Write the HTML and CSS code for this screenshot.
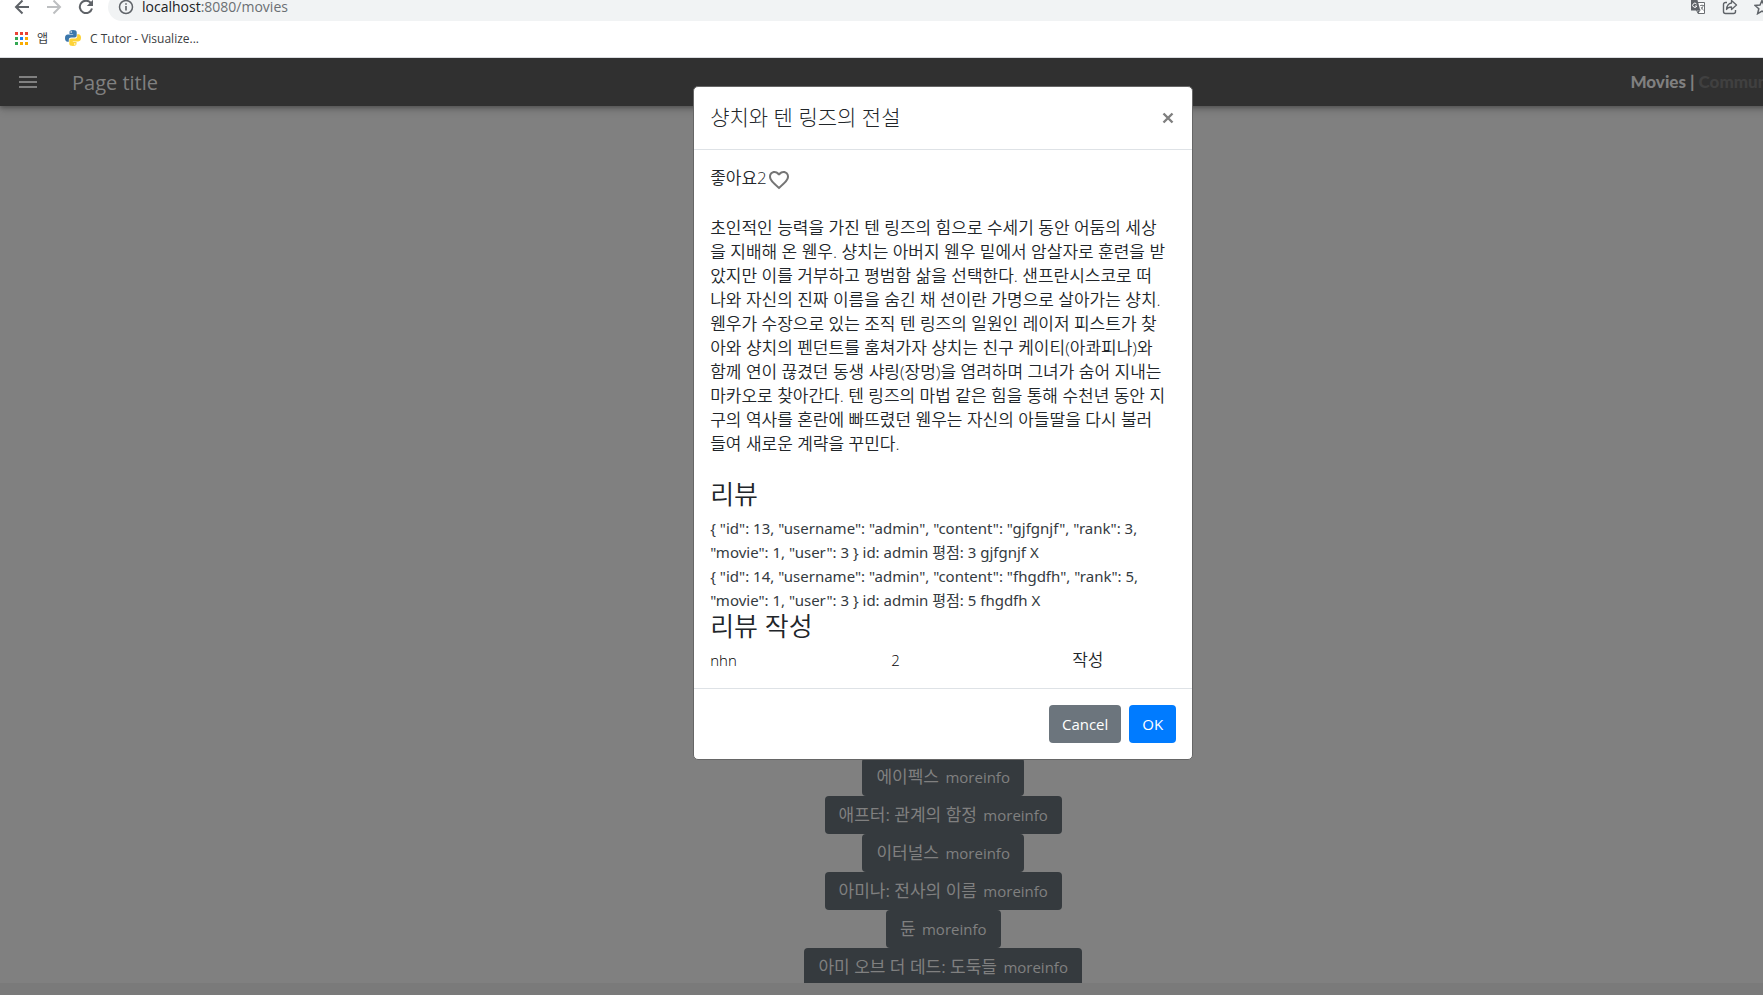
FILE: index.html
```html
<!DOCTYPE html>
<html lang="ko">
<head>
<meta charset="utf-8">
<title>Movies</title>
<link rel="stylesheet" href="styles.css">
</head>
<body>
<header class="browser">
  <div class="toolbar">
    <button class="tool" aria-label="Back"><svg width="16" height="16" viewBox="0 0 16 16"><path d="M15 8H2.500M8.500 1.500 2 8l6.500 6.500" fill="none" stroke="#5f6368" stroke-width="2"/></svg></button>
    <button class="tool" aria-label="Forward"><svg width="16" height="16" viewBox="0 0 16 16"><path d="M1 8h12.500M7.500 1.500 14 8l-6.500 6.500" fill="none" stroke="#bdbfc1" stroke-width="2"/></svg></button>
    <button class="tool" aria-label="Reload"><svg width="16" height="16" viewBox="0 0 16 16"><path d="M13 4.200A6.200 6.200 0 1 0 14 9.500" fill="none" stroke="#5f6368" stroke-width="2"/><path d="M15 .8V7H8.800z" fill="#5f6368"/></svg></button>
    <div class="omnibox">
      <svg width="16" height="16" viewBox="0 0 16 16"><circle cx="8" cy="8" r="6.500" fill="none" stroke="#5f6368" stroke-width="1.500"/><path d="M8 7v4.500M8 4.200v1.600" stroke="#5f6368" stroke-width="1.600"/></svg>
      <span class="url"><b>localhost</b>:8080/movies</span>
      <span class="omni-actions">
        <svg width="16" height="16" viewBox="0 0 16 16"><path d="M6 3.500h8.500v11H8L6.500 11" fill="#fff" stroke="#6b6e72"/><path d="M1 1h6.500l2.800 10.500H1z" fill="#5f6368"/><path d="M6.500 5a2.100 2.100 0 1 0 .3 2H5" fill="none" stroke="#fff"/><path d="M10 6.500h4M12 5.500v1M13.200 6.500c-.4 2-1.500 3.500-2.700 4.500M11 8l2.500 3.500" fill="none" stroke="#6b6e72" stroke-width=".8"/><path d="M7.500 11.500h2.800L8.200 14.500z" fill="#5f6368"/></svg>
        <svg width="16" height="16" viewBox="0 0 16 16"><path d="M5 3.500H3.500a2 2 0 0 0-2 2v7a2 2 0 0 0 2 2h8a2 2 0 0 0 2-2V11" fill="none" stroke="#5f6368" stroke-width="1.400"/><path d="M9.500 1.500 14.500 6l-5 4.500V8C7 8 5.500 8.800 4.500 10.500 4.800 7 6.500 4.500 9.500 4z" fill="none" stroke="#5f6368" stroke-width="1.300" stroke-linejoin="round"/></svg>
        <svg width="16" height="16" viewBox="0 0 16 16"><path d="m8 1.500 2 4.600 5 .4-3.800 3.300 1.200 4.900L8 12.100l-4.400 2.600 1.200-4.900L1 6.500l5-.4z" fill="none" stroke="#5f6368" stroke-width="1.500"/></svg>
      </span>
    </div>
  </div>
  <nav class="bookmarks">
    <a href="#" class="bookmark"><svg width="13" height="13" viewBox="0 0 13 13"><path d="M0 0h3v3H0zM5 0h3v3H5zM10 0h3v3h-3z" fill="#ea4335"/><path d="M0 5h3v3H0zM0 10h3v3H0z" fill="#34a853"/><path d="M5 5h3v3H5z" fill="#1a82f7"/><path d="M10 5h3v3h-3zM5 10h3v3H5zM10 10h3v3h-3z" fill="#f9ab00"/></svg><span>앱</span></a>
    <a href="#" class="bookmark"><svg width="16" height="16" viewBox="0 0 16 16"><path d="M8 0C5 0 4.500 1 4.500 2.200V4H8.200v.6H2.800C1 4.600 0 6 0 8.200s1 3.600 2.500 3.600h1.300V9.800c0-1.400 1.100-2.300 2.400-2.300h3.500c1.100 0 2-.9 2-2V2.200C11.700.8 10.500 0 8 0z" fill="#3b77ab"/><circle cx="6.200" cy="2" r=".8" fill="#fff"/><path d="M8 16c3 0 3.500-1 3.500-2.200V12H7.800v-.6h5.400c1.800 0 2.800-1.400 2.800-3.600s-1-3.600-2.500-3.600h-1.300v2c0 1.400-1.100 2.300-2.400 2.300H6.300c-1.100 0-2 .9-2 2v3.300C4.300 15.200 5.500 16 8 16z" fill="#fdd337"/><circle cx="9.800" cy="14" r=".8" fill="#fff"/></svg><span>C Tutor - Visualize...</span></a>
  </nav>
</header>
<div class="viewport">
  <div class="page">
    <header class="appbar">
      <button class="menu" aria-label="Menu"><svg width="24" height="24" viewBox="0 0 24 24"><path d="M3 6h18v2H3zM3 11h18v2H3zM3 16h18v2H3z" fill="#808080"/></svg></button>
      <h1 class="page-title">Page title</h1>
      <nav class="links"><a href="#" class="current">Movies</a> | <a href="#">Community</a></nav>
    </header>
    <main class="movies">
      <button class="movie">에이펙스 <span class="more">moreinfo</span></button>
      <button class="movie">애프터: 관계의 함정 <span class="more">moreinfo</span></button>
      <button class="movie">이터널스 <span class="more">moreinfo</span></button>
      <button class="movie">아미나: 전사의 이름 <span class="more">moreinfo</span></button>
      <button class="movie">듄 <span class="more">moreinfo</span></button>
      <button class="movie">아미 오브 더 데드: 도둑들 <span class="more">moreinfo</span></button>
    </main>
    <section class="modal" role="dialog" aria-labelledby="modal-title">
      <header class="modal-header">
        <h2 class="modal-title" id="modal-title">샹치와 텐 링즈의 전설</h2>
        <button class="close" aria-label="Close"><svg width="12" height="12" viewBox="0 0 12 12"><path d="m1.500 1.500 9 9m0-9-9 9" stroke="#7f7f7f" stroke-width="2.400"/></svg></button>
      </header>
      <div class="modal-body">
        <div class="like"><span>좋아요2</span><button class="heart" aria-label="Like"><svg width="24" height="24" viewBox="0 0 24 24"><path d="M12.100 18.550l-.1.100-.110-.100C7.140 14.240 4 11.390 4 8.500 4 6.500 5.500 5 7.500 5c1.540 0 3.040 1 3.570 2.360h1.860C13.460 6 14.960 5 16.500 5c2 0 3.500 1.500 3.500 3.500 0 2.890-3.140 5.740-7.900 10.050M16.500 3c-1.740 0-3.410.810-4.500 2.080C10.910 3.810 9.240 3 7.500 3 4.420 3 2 5.410 2 8.500c0 3.770 3.400 6.860 8.550 11.530L12 21.350l1.450-1.320C18.600 15.360 22 12.270 22 8.500 22 5.410 19.580 3 16.500 3z" fill="#757575"/></svg></button></div>
        <p class="overview">초인적인 능력을 가진 텐 링즈의 힘으로 수세기 동안 어둠의 세상<br>을 지배해 온 웬우. 샹치는 아버지 웬우 밑에서 암살자로 훈련을 받<br>았지만 이를 거부하고 평범함 삶을 선택한다. 샌프란시스코로 떠<br>나와 자신의 진짜 이름을 숨긴 채 션이란 가명으로 살아가는 샹치.<br>웬우가 수장으로 있는 조직 텐 링즈의 일원인 레이저 피스트가 찾<br>아와 샹치의 펜던트를 훔쳐가자 샹치는 친구 케이티(아콰피나)와<br>함께 연이 끊겼던 동생 샤링(장멍)을 염려하며 그녀가 숨어 지내는<br>마카오로 찾아간다. 텐 링즈의 마법 같은 힘을 통해 수천년 동안 지<br>구의 역사를 혼란에 빠뜨렸던 웬우는 자신의 아들딸을 다시 불러<br>들여 새로운 계략을 꾸민다.</p>
        <h3 class="section">리뷰</h3>
        <div class="review">{ "id": 13, "username": "admin", "content": "gjfgnjf", "rank": 3,<br>"movie": 1, "user": 3 } id: admin 평점: 3 gjfgnjf X</div>
        <div class="review">{ "id": 14, "username": "admin", "content": "fhgdfh", "rank": 5,<br>"movie": 1, "user": 3 } id: admin 평점: 5 fhgdfh X</div>
        <h3 class="section">리뷰 작성</h3>
        <form class="write">
          <input class="field" type="text" value="nhn" aria-label="리뷰">
          <input class="field" type="text" value="2" aria-label="평점">
          <button class="submit" type="button">작성</button>
        </form>
      </div>
      <footer class="modal-footer">
        <button class="btn cancel">Cancel</button>
        <button class="btn ok">OK</button>
      </footer>
    </section>
  </div>
  <div class="scrollbar"></div>
</div>
</body>
</html>
```
FILE: styles.css
```css
* { box-sizing: border-box; }
body {
  margin: 0;
  height: 100vh;
  display: flex;
  flex-direction: column;
  overflow: hidden;
  background: #fff;
  color: #212529;
  font-family: "Open Sans", "Noto Sans CJK KR", sans-serif;
}
button, input {
  margin: 0;
  padding: 0;
  border: 0;
  background: none;
  font: inherit;
  color: inherit;
}
svg { display: block; flex: none; }
a { color: inherit; text-decoration: none; }

.browser { flex: none; border-bottom: 1px solid #dadce0; }
.toolbar {
  height: 21px;
  display: flex;
  align-items: flex-end;
  overflow: hidden;
  padding-left: 14px;
  gap: 16px;
}
.tool { height: 28px; display: flex; align-items: center; }
.omnibox {
  flex: 1;
  height: 28px;
  margin-left: -2px;
  padding-left: 10px;
  display: flex;
  align-items: center;
  gap: 8px;
  background: #f1f3f4;
  border-radius: 14px 0 0 14px;
}
.url {
  font-family: "Open Sans", sans-serif;
  font-size: 14px;
  line-height: 14px;
  color: #6b6f73;
}
.url b { font-weight: 400; color: #202124; }
.omni-actions { display: flex; gap: 16px; margin-left: auto; margin-right: -7px; }
.bookmarks {
  height: 36px;
  padding: 0 15px 2px;
  display: flex;
  align-items: center;
  gap: 17px;
  font-size: 12px;
  color: #3c4043;
}
.bookmark { display: flex; align-items: center; gap: 9px; }

.viewport {
  flex: 1;
  min-height: 0;
  display: flex;
  flex-direction: column;
  overflow: hidden;
  background: #808080;
}
.page {
  position: relative;
  flex: 1;
  min-height: 0;
  width: 107%;
  display: flex;
  flex-direction: column;
}
.scrollbar { flex: none; height: 12px; background: #7a7a7a; }
.appbar {
  flex: none;
  height: 48px;
  padding-left: 16px;
  display: flex;
  align-items: center;
  background: #303030;
  color: #808080;
  box-shadow: 0 2px 4px rgba(0, 0, 0, .25), 0 4px 8px rgba(0, 0, 0, .15);
}
.page-title { flex: 1; margin: 0 0 0 32px; font-size: 20px; font-weight: 500; }
.links {
  width: 256px;
  font: 900 17px/24px Lato, sans-serif;
  white-space: nowrap;
}
.links a { color: #404040; }
.links .current { color: #808080; }

.movies {
  flex: 1;
  min-height: 0;
  overflow: hidden;
  padding-top: 652px;
  display: flex;
  flex-direction: column;
  align-items: center;
}
.movie {
  flex: none;
  height: 38px;
  padding: 0 14px 4px;
  border-radius: 4px;
  background: #353a3e;
  color: #808080;
  font-size: 17px;
}
.more { margin-left: 2px; font-size: 15px; font-weight: 500; }

.modal {
  position: absolute;
  top: 28px;
  left: calc(50% - 250px);
  width: 500px;
  background: #fff;
  border: 1px solid #666;
  border-radius: 5px;
}
.modal-header {
  display: flex;
  align-items: center;
  justify-content: space-between;
  padding: 16px;
  border-bottom: 1px solid #dee2e6;
}
.modal-title { margin: 0; font-size: 21px; line-height: 28px; padding-bottom: 2px; font-weight: 300; }
.close { padding: 2px; }
.modal-body {
  padding: 16px;
  font-size: 17px;
  line-height: 24px;
  font-weight: 350;
}
.like { display: flex; }
.heart { padding-top: 2px; }
.overview { margin: 24px 0; white-space: nowrap; }
.section { margin: 0 0 8px; font-size: 26px; line-height: 28px; font-weight: 350; }
.review {
  font-family: "Noto Sans", "Noto Sans CJK KR", sans-serif;
  font-size: 15px;
  font-weight: 400;
  color: #343a40;
  white-space: nowrap;
}
.write { display: flex; font-size: 15px; line-height: 24px; }
.field { width: 181px; height: 24px; color: #000; }
.submit { font-size: 17px; }
.modal-footer {
  display: flex;
  justify-content: flex-end;
  gap: 8px;
  padding: 16px;
  border-top: 1px solid #dee2e6;
}
.btn {
  height: 38px;
  padding: 0 13px;
  border-radius: 4px;
  color: #fff;
  font-size: 15px;
  font-weight: 500;
}
.cancel { background: #6c757d; }
.ok { background: #007bff; }
```
